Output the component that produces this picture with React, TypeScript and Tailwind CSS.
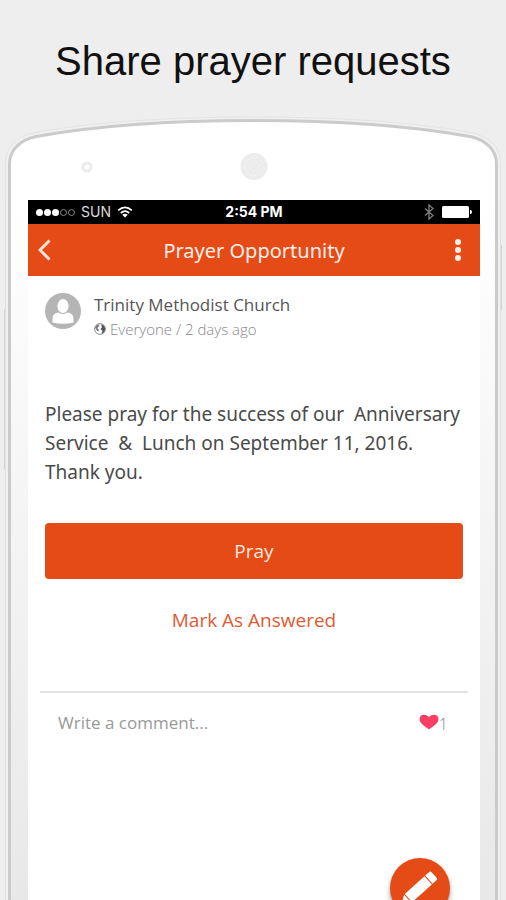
import React from 'react';

interface IconProps {
  className?: string;
}

const WifiIcon: React.FC<IconProps> = ({ className = '' }) => (
  <svg viewBox="0 0 16 12" fill="none" stroke="white" strokeWidth="1.8" className={className} aria-hidden="true">
    <path d="M1.2 4.4Q8-1.6 14.8 4.4" />
    <path d="M3.8 7Q8 3.2 12.2 7" />
    <path d="M8 11.6L5.2 8.8Q8 6.6 10.8 8.8Z" fill="white" stroke="none" />
  </svg>
);

const BluetoothIcon: React.FC<IconProps> = ({ className = '' }) => (
  <svg viewBox="0 0 10 16" fill="none" stroke="#808080" strokeWidth="1.3" className={className} aria-hidden="true">
    <path d="M1 4.5L9 11.5L5 15V1L9 4.5L1 11.5" />
  </svg>
);

const BatteryIcon: React.FC<IconProps> = ({ className = '' }) => (
  <svg viewBox="0 0 30 12" fill="white" className={className} aria-hidden="true">
    <rect width="27" height="12" rx="1.5" />
    <path d="M28 3.8Q30 4 30 6T28 8.2Z" />
  </svg>
);

const AvatarIcon: React.FC<IconProps> = ({ className = '' }) => (
  <svg viewBox="0 0 36 36" className={className} aria-hidden="true">
    <circle cx="18" cy="18" r="18" fill="#b5b5b5" />
    <path d="M7.5 29.5V26Q7.5 19.5 14 19.5H22Q28.5 19.5 28.5 26V29.5Q18 32 7.5 29.5Z" fill="white" />
    <ellipse cx="18" cy="13" rx="6.2" ry="7.5" fill="white" stroke="#b5b5b5" strokeWidth="1.2" />
  </svg>
);

const GlobeIcon: React.FC<IconProps> = ({ className = '' }) => (
  <svg viewBox="0 0 12 12" className={className} aria-hidden="true">
    <circle cx="6" cy="6" r="5.4" fill="white" stroke="#8a8a8a" strokeWidth="1" />
    <path d="M1 4.5L3 2L5.5 1.5L4.8 3.5L3.2 5.2L5 6.8L4.2 8.5L2.5 7Z" fill="#777" />
    <path d="M7 1.5L10 2.5L11.3 6L10 9.5L7.5 10.8L8.5 8L6.5 6L8 4.2Z" fill="#555" />
  </svg>
);

const HeartIcon: React.FC<IconProps> = ({ className = '' }) => (
  <svg viewBox="0 0 20 16" fill="#f93f66" className={className} aria-hidden="true">
    <path d="M10 15.5C7 13 .5 9.5 .5 5C.5 2.2 2.6 .7 5 .7C7.2 .7 9 1.7 10 3C11 1.7 12.8 .7 15 .7C17.4 .7 19.5 2.2 19.5 5C19.5 9.5 13 13 10 15.5Z" />
  </svg>
);

const PencilIcon: React.FC<IconProps> = ({ className = '' }) => (
  <svg viewBox="0 0 60 60" fill="white" className={className} aria-hidden="true">
    <g transform="translate(43 18) rotate(-42)">
      <path d="M-5.5 -5.5H-.5Q1.5 -5.5 1.5 -3.5V3.5Q1.5 5.5 -.5 5.5H-5.5Z" />
      <path d="M-33 -5.5H-6.5V5.5H-33Z" />
      <path d="M-34 -5.5V5.5L-42 0Z" />
    </g>
  </svg>
);

// Curved top of the handset with the camera and earpiece
const PhoneTop: React.FC = () => (
  <svg viewBox="0 0 506 84" preserveAspectRatio="none" className="block h-[84px] w-full shrink-0" aria-hidden="true">
    <path
      d="M5.5 84V47C5.5 32 16 21 35 16.5C100 5 175 1 253 1C331 1 406 5 471 16.5C490 21 500.5 32 500.5 47V84"
      fill="#f0f0f0"
      stroke="#e4e4e4"
    />
    <path
      d="M9.5 86V48C9.5 34 20 24 36 20.5C100 9 175 4.5 253 4.5C331 4.5 406 9 470 20.5C486 24 496.5 34 496.5 48V86"
      fill="white"
      stroke="#cbcbcb"
      strokeWidth="3"
    />
    <circle cx="87" cy="51" r="4" fill="white" stroke="#ececec" strokeWidth="3" />
    <circle cx="254" cy="50.5" r="13.5" fill="#ececec" />
    <circle cx="254" cy="50.5" r="9" fill="none" stroke="#f6f6f6" strokeDasharray="2 2" />
    <circle cx="254" cy="50.5" r="5" fill="none" stroke="#f6f6f6" strokeDasharray="2 2" />
  </svg>
);

const statusDots = [true, true, true, false, false];

const StatusBar: React.FC = () => (
  <div className="grid h-6 grid-cols-3 items-center bg-black px-2 font-[Inter,sans-serif] text-sm text-white">
    <div className="flex items-center gap-[6px]">
      <div className="flex gap-px">
        {statusDots.map((filled, i) => (
          <span
            key={i}
            className={filled ? 'size-[7px] rounded-full bg-white' : 'size-[7px] rounded-full border border-[#888]'}
          />
        ))}
      </div>
      <span className="text-[#ddd]">SUN</span>
      <WifiIcon className="h-3 w-4" />
    </div>
    <span className="text-center font-bold">2:54 PM</span>
    <div className="flex items-center justify-end gap-2">
      <BluetoothIcon className="h-4 w-[10px]" />
      <BatteryIcon className="h-3 w-[30px]" />
    </div>
  </div>
);

const AppBar: React.FC = () => (
  <header className="flex h-13 items-center justify-between bg-[#e54b17] px-[10px] text-white">
    <button type="button" aria-label="Back" className="flex w-6 items-center">
      <svg viewBox="0 0 13 22" fill="none" stroke="#ffe3d6" strokeWidth="3" className="h-[22px] w-[13px]" aria-hidden="true">
        <path d="M11.5 1.5L2 11L11.5 20.5" />
      </svg>
    </button>
    <h2 className="pt-[2px] font-['Noto_Sans',sans-serif] text-xl text-[#ffefe8]">Prayer Opportunity</h2>
    <button type="button" aria-label="More options" className="flex w-6 flex-col items-center gap-[2px]">
      <span className="size-[6px] rounded-full bg-[#fff0ea]" />
      <span className="size-[6px] rounded-full bg-[#fff0ea]" />
      <span className="size-[6px] rounded-full bg-[#fff0ea]" />
    </button>
  </header>
);

const PrayerRequest: React.FC = () => (
  <article className="px-[17px] pt-[17px]">
    <div className="flex gap-[13px]">
      <AvatarIcon className="size-9" />
      <div>
        <h3 className="text-[17px] leading-6 text-[#555]">Trinity Methodist Church</h3>
        <p className="flex items-center gap-1 text-[15px] leading-6 font-light text-[#888]">
          <GlobeIcon className="size-3" />
          Everyone / 2 days ago
        </p>
      </div>
    </div>
    <p className="mt-[59px] font-['Noto_Sans',sans-serif] text-[19px] leading-[29px] whitespace-pre-wrap text-[#4a4a4a]">
      {'Please pray for the success of our  Anniversary Service  &  Lunch on September 11, 2016.\nThank you.'}
    </p>
    <button type="button" className="mt-9 h-14 w-full rounded-sm bg-[#e54b17] text-[19px] text-[#ffe9df]">
      Pray
    </button>
    <button type="button" className="mt-[25px] h-8 w-full text-[19px] text-[#e05a33]">
      Mark As Answered
    </button>
  </article>
);

const CommentBar: React.FC = () => (
  <div className="mx-3 mt-[55px] flex items-center border-t-2 border-[#e2e2e2] pt-[13px] pr-5 pl-[18px]">
    <input
      type="text"
      aria-label="Write a comment"
      placeholder="Write a comment..."
      className="h-8 min-w-0 flex-1 text-[17px] outline-none placeholder:text-[#999]"
    />
    <button type="button" aria-label="Like, 1 so far" className="flex items-center text-base font-light text-[#888]">
      <HeartIcon className="h-4 w-5" />
      <span className="pt-1">1</span>
    </button>
  </div>
);

const App: React.FC = () => {
  return (
    <main className="flex h-screen flex-col overflow-hidden bg-[#eee] font-['Open_Sans',sans-serif]">
      <h1 className="pt-[38px] pb-8 text-center font-['Liberation_Sans',sans-serif] text-[40px] leading-[46px] text-[#111]">
        Share prayer requests
      </h1>
      <PhoneTop />
      <div className="relative mx-[5px] flex flex-1 border-x border-[#e0e0e0] bg-[#f0f0f0] px-[2px]">
        {/* volume and power keys */}
        <span className="absolute top-[110px] -left-[2px] h-[160px] w-px bg-[#d4d4d4]" />
        <span className="absolute top-[45px] -right-[2px] h-[65px] w-px bg-[#d4d4d4]" />
        <div className="flex flex-1 border-x-[3px] border-[#cbcbcb] bg-linear-to-b from-white to-[#e8e8e8] pr-[15px] pl-[17px]">
          <section className="relative flex-1 bg-white">
            <StatusBar />
            <AppBar />
            <PrayerRequest />
            <CommentBar />
            <button
              type="button"
              aria-label="Write a prayer request"
              className="absolute right-[30px] -bottom-[18px] size-15 rounded-full bg-[#e54b17] shadow-md shadow-black/40"
            >
              <PencilIcon className="size-15" />
            </button>
          </section>
        </div>
      </div>
    </main>
  );
};

export default App;
